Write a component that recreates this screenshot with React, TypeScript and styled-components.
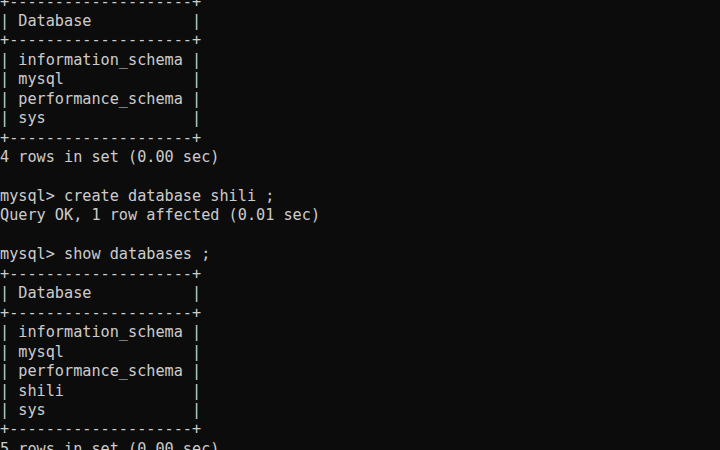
import React from "react";
import styled, { createGlobalStyle } from "styled-components";

const Global = createGlobalStyle`
  html, body {
    margin: 0;
    padding: 0;
    background: #0c0c0c;
    overflow: hidden;
  }
`;

const Terminal = styled.div`
  width: 720px;
  height: 450px;
  overflow: hidden;
  background: #0c0c0c;
  color: #cccccc;
  font-family: "DejaVu Sans Mono", "Liberation Mono", monospace;
  font-size: 15.2px;
  line-height: 19.45px;
`;

const Output = styled.pre`
  margin: -7.5px 0 0 0;
  padding: 0;
  font: inherit;
  white-space: pre;
`;

const lines = [
  "+--------------------+",
  "| Database           |",
  "+--------------------+",
  "| information_schema |",
  "| mysql              |",
  "| performance_schema |",
  "| sys                |",
  "+--------------------+",
  "4 rows in set (0.00 sec)",
  "",
  "mysql> create database shili ;",
  "Query OK, 1 row affected (0.01 sec)",
  "",
  "mysql> show databases ;",
  "+--------------------+",
  "| Database           |",
  "+--------------------+",
  "| information_schema |",
  "| mysql              |",
  "| performance_schema |",
  "| shili              |",
  "| sys                |",
  "+--------------------+",
  "5 rows in set (0.00 sec)",
];

export default function App() {
  return (
    <>
      <Global />
      <Terminal>
        <Output>{lines.join("\n")}</Output>
      </Terminal>
    </>
  );
}
